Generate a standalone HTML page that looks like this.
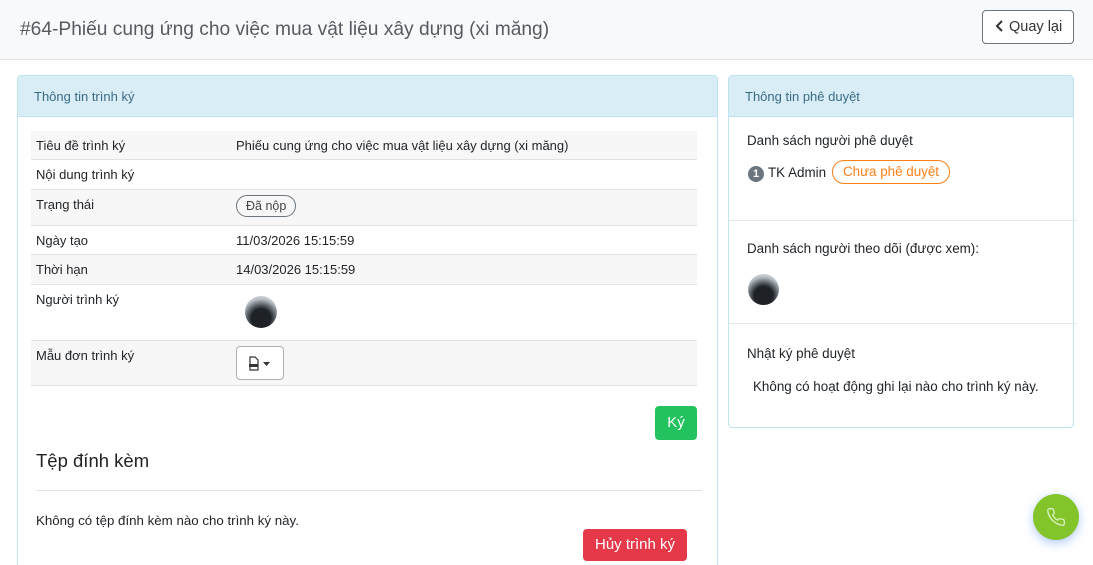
<!DOCTYPE html>
<html style="overflow:hidden;height:565px"><head><meta charset="utf-8"><style>
*{box-sizing:border-box;margin:0;padding:0}
body{width:1093px;height:565px;overflow:hidden;background:#fff;font-family:"Liberation Sans","Noto Sans CJK SC",sans-serif;font-size:13px;color:#212529;position:relative}
.a{position:absolute}
.hdr{left:0;top:0;width:1093px;height:60px;background:#f8f9fa;border-bottom:1px solid #e3e5e8}
.card{border:1px solid #bfe3ef;border-radius:4px;background:#fff}
.ch{background:#d9edf7;border-bottom:1px solid #bfe3ef;color:#3a6b84;font-size:13px;padding:13px 16px;height:41px}
.row{position:absolute;left:31px;width:666px;border-bottom:1px solid #e2e2e2}
.g{background:#f7f7f7}
.lbl{position:absolute;left:5px}
.val{position:absolute;left:205px}
.av{border-radius:50%;background:radial-gradient(circle at 50% 70%,#1e2226 0 35%,#5a6168 50%,#b7bdc2 70%,#dfe3e6 90%);}
.r{font-size:13.4px}
</style></head><body>
<div class="a hdr"></div>
<div class="a" style="left:20px;top:19px;font-size:19.2px;color:#555b61">#64-Phiếu cung ứng cho việc mua vật liệu xây dựng (xi măng)</div>
<div class="a" style="left:982px;top:10px;width:92px;height:34px;border:1px solid #6c757d;border-radius:4px;background:#fff;font-size:14.5px;color:#333;padding-top:8px;padding-left:12px"><svg width="10" height="12" viewBox="0 0 10 12" style="vertical-align:-1px"><path d="M7 1L2 6l5 5" fill="none" stroke="#333" stroke-width="2"/></svg> Quay lại</div>

<div class="a card" style="left:17px;top:75px;width:701px;height:490px;border-bottom:none;border-radius:4px 4px 0 0">
<div class="ch">Thông tin trình ký</div></div>
<div class="row g" style="top:131px;height:29px"><span class="lbl" style="top:7px">Tiêu đề trình ký</span><span class="val" style="top:7px">Phiếu cung ứng cho việc mua vật liệu xây dựng (xi măng)</span></div>
<div class="row" style="top:160px;height:30px"><span class="lbl" style="top:7px">Nội dung trình ký</span></div>
<div class="row g" style="top:190px;height:36px"><span class="lbl" style="top:7px">Trạng thái</span><span class="val" style="top:5px;border:1px solid #6c757d;border-radius:12px;padding:3px 9px;font-size:12.5px;color:#444">Đã nộp</span></div>
<div class="row" style="top:226px;height:29px"><span class="lbl" style="top:7px">Ngày tạo</span><span class="val" style="top:7px">11/03/2026 15:15:59</span></div>
<div class="row g" style="top:255px;height:30px"><span class="lbl" style="top:7px">Thời hạn</span><span class="val" style="top:7px">14/03/2026 15:15:59</span></div>
<div class="row" style="top:285px;height:56px"><span class="lbl" style="top:7px">Người trình ký</span><div class="a av" style="left:214px;top:11px;width:32px;height:32px"></div></div>
<div class="row g" style="top:341px;height:45px"><span class="lbl" style="top:7px">Mẫu đơn trình ký</span>
<div class="a" style="left:205px;top:5px;width:48px;height:34px;border:1px solid #aab0b6;border-radius:4px;background:#fff"><svg class="a" style="left:11px;top:9px" width="26" height="16" viewBox="0 0 26 16"><path d="M2 1h5l3 3v10H2z" fill="none" stroke="#333" stroke-width="1.2"/><rect x="1" y="8" width="9" height="3" fill="#333"/><path d="M15 6h7l-3.5 4z" fill="#333"/></svg></div></div>
<div class="a" style="left:655px;top:406px;width:42px;height:34px;background:#22c35e;border-radius:4px;color:#fff;font-size:15px;text-align:center;line-height:34px">Ký</div>
<div class="a" style="left:36px;top:450px;font-size:18.5px;color:#222">Tệp đính kèm</div>
<div class="a" style="left:36px;top:490px;width:666px;border-top:1px solid #e2e2e2"></div>
<div class="a" style="left:36px;top:513px;font-size:13.3px">Không có tệp đính kèm nào cho trình ký này.</div>
<div class="a" style="left:583px;top:529px;width:104px;height:32px;background:#e5394a;border-radius:4px;color:#fff;font-size:15px;text-align:center;line-height:32px">Hủy trình ký</div>

<div class="a card" style="left:728px;top:75px;width:346px;height:353px"><div class="ch">Thông tin phê duyệt</div></div>
<div class="a r" style="left:747px;top:133px">Danh sách người phê duyệt</div>
<div class="a" style="left:748px;top:166px;width:16px;height:16px;border-radius:50%;background:#6c757d;color:#fff;font-size:11px;text-align:center;line-height:16px;font-weight:bold">1</div>
<div class="a r" style="left:768px;top:165px">TK Admin</div>
<div class="a r" style="left:832px;top:160px;width:118px;height:24px;border:1px solid #fd7e14;border-radius:12px;color:#fd7e14;text-align:center;line-height:22px">Chưa phê duyệt</div>
<div class="a" style="left:728px;top:220px;width:349px;border-top:1px solid #e6e8ea"></div>
<div class="a r" style="left:747px;top:241px">Danh sách người theo dõi (được xem):</div>
<div class="a av" style="left:748px;top:274px;width:31px;height:31px"></div>
<div class="a" style="left:728px;top:323px;width:349px;border-top:1px solid #e6e8ea"></div>
<div class="a r" style="left:747px;top:346px">Nhật ký phê duyệt</div>
<div class="a r" style="left:753px;top:379px">Không có hoạt động ghi lại nào cho trình ký này.</div>

<div class="a" style="left:1033px;top:494px;width:46px;height:46px;border-radius:50%;background:#84c42b;box-shadow:0 3px 10px rgba(80,130,255,.45)"><svg class="a" style="left:13px;top:13px" width="20" height="20" viewBox="0 0 24 24"><path d="M22 16.9v3a2 2 0 0 1-2.2 2 19.8 19.8 0 0 1-8.6-3.1 19.5 19.5 0 0 1-6-6A19.8 19.8 0 0 1 2.1 4.2 2 2 0 0 1 4.1 2h3a2 2 0 0 1 2 1.7c.1.9.4 1.8.7 2.7a2 2 0 0 1-.5 2.1L8 9.8a16 16 0 0 0 6 6l1.3-1.3a2 2 0 0 1 2.1-.4c.9.3 1.8.6 2.7.7a2 2 0 0 1 1.7 2z" fill="none" stroke="#d9efc0" stroke-width="1.6"/></svg></div>
</body></html>
